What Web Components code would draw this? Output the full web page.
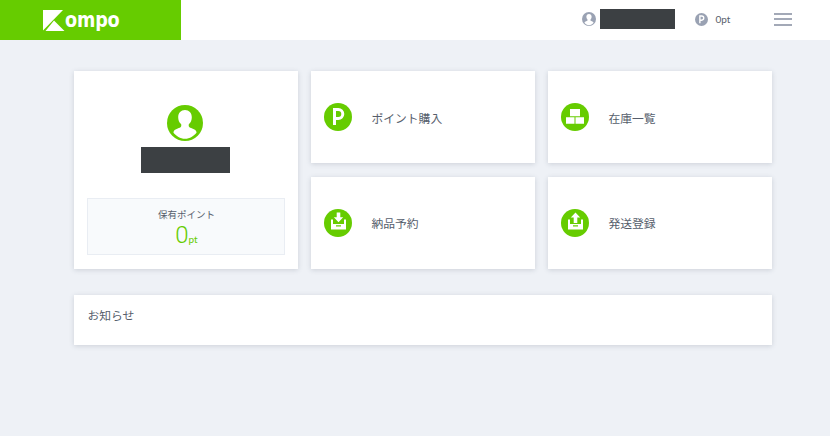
<!DOCTYPE html>
<html lang="ja"><head><meta charset="utf-8"><title>Kompo</title>
<style>
html,body{margin:0;padding:0;height:100%;overflow:hidden}
body{background:#eef1f6;font-family:"Lato","Noto Sans CJK JP",sans-serif;color:#4a5260}
</style></head><body>
<app-header></app-header>
<app-main>
  <profile-card></profile-card>
  <menu-card label="ポイント購入" icon="p"></menu-card>
  <menu-card label="在庫一覧" icon="boxes"></menu-card>
  <menu-card label="納品予約" icon="in"></menu-card>
  <menu-card label="発送登録" icon="out"></menu-card>
  <notice-card></notice-card>
</app-main>
<script>
const G="#66cc00";
const PGLYPH=`<path fill="none" stroke="#fff" stroke-width="3" d="M10.500 22V6.500h3.800a4.500 4.500 0 0 1 0 9h-3.800"/>`;
const TRAY=`<path fill="#fff" fill-rule="evenodd" d="M7 10.500h15v10H7zM9 10.500v4.500h11v-4.500zM12 16.300v1.200h5v-1.200z"/>`;
const ICONS={
 p:`<circle cx="14" cy="14" r="14" fill="${G}"/>${PGLYPH}`,
 boxes:`<circle cx="14" cy="14" r="14" fill="${G}"/><path fill="#fff" d="M9 6h10v7.300H9zM5 14.300h8.500v6.500H5zM14.500 14.300h8.500v6.500h-8.500z"/>`,
 in:`<circle cx="14" cy="14" r="14" fill="${G}"/>${TRAY}<path fill="#fff" d="M12.700 3.500h3.600v4.700h2.900l-4.700 5-4.700-5h2.900z"/>`,
 out:`<circle cx="14" cy="14" r="14" fill="${G}"/>${TRAY}<path fill="#fff" d="M14.500 3.500l4.700 5h-2.900v5.500h-3.600V8.500H9.800z"/>`
};
const PERSON=(bg,fg)=>`<circle cx="18" cy="18" r="18" fill="${bg}"/><path fill="${fg}" d="M18 5c-4 0-6.800 3-6.800 7.200 0 3 1 5.300 2.800 6.800.4.400.6 2.500-.5 3.300-1.600 1.100-6.300 1.700-7 4.700a1.500 1.500 0 0 0 .2 1C9 30.800 13.300 33.800 18 33.800s9-3 11.300-5.800a1.500 1.500 0 0 0 .2-1c-.7-3-5.400-3.600-7-4.700-1.100-.8-.9-2.900-.5-3.300 1.800-1.500 2.800-3.800 2.800-6.800C24.800 8 22 5 18 5z"/>`;
function def(name,html,init){
  customElements.define(name,class extends HTMLElement{
    constructor(){super();this.attachShadow({mode:"open"}).innerHTML=html;}
    connectedCallback(){init&&init(this.shadowRoot,this);}
  });
}
def("app-header",`<style>
:host{display:flex;height:39.500px;background:#fff;align-items:stretch;color:#59606c}
.logo{width:181px;background:${G};display:flex;align-items:center;padding-left:43px;box-sizing:border-box;flex:none;overflow:hidden}
.logo svg{display:block;flex:none;margin-top:1px}
.logo span{font:900 20.500px/1 "DejaVu Sans",sans-serif;color:#fff;letter-spacing:-.2px;margin:0;transform:scaleX(.86);transform-origin:left;white-space:nowrap}
.right{margin-left:auto;display:flex;align-items:center;height:38.500px;padding-right:38px}
.ava{width:14px;height:14px;display:block;margin-right:4px}
.mask{width:75px;height:20px;background:#3c4043;margin-right:20px}
.pi{width:13px;height:13px;display:block;margin-right:8px}
.pt{font-size:10px;width:14px;margin-right:44px;white-space:nowrap}
.burger{width:18.500px;display:flex;flex-direction:column;gap:3.500px}
.burger i{display:block;height:2px;background:#a3a9b7}
</style>
<div class="logo"><svg width="22" height="21" viewBox="0 0 22 21"><path fill="#fff" d="M0 0h20L0 20.500zM2.500 21L11 10.500 21.500 21z"/></svg><span>ompo</span></div>
<div class="right">
<svg class="ava" viewBox="0 0 36 36">${PERSON("#9aa2b3","#fff")}</svg><div class="mask"></div>
<svg class="pi" viewBox="0 0 28 28"><circle cx="14" cy="14" r="14" fill="#9aa2b3"/>${PGLYPH}</svg>
<span class="pt">0pt</span>
<div class="burger"><i></i><i></i><i></i></div>
</div>`);
def("app-main",`<style>
:host{display:grid;grid-template-columns:repeat(3,224px);grid-template-rows:92px 92px auto;column-gap:13px;row-gap:13.500px;padding:31.500px 0 0 74.400px}
::slotted(profile-card){grid-row:1/3}
::slotted(notice-card){grid-column:1/4;margin-top:13px}
</style><slot></slot>`);
const CARD=`background:#fff;box-shadow:0 1px 5px rgba(70,80,100,.2);`;
def("profile-card",`<style>
:host{display:flex;flex-direction:column;align-items:center;${CARD}padding:34px 13px 13px;box-sizing:border-box}
svg{width:36px;height:36px;display:block;margin-right:3px}
.mask{width:89px;height:26px;background:#3c4043;margin-top:6px;margin-right:1px}
.box{margin-top:25px;align-self:stretch;height:57px;box-sizing:border-box;background:#f8fafc;border:1px solid #e9edf3;text-align:center;padding-top:9px}
.l{font-size:9.500px;line-height:13px;color:#565e6c;display:block}
.v{display:block;color:${G};font:300 24px/26px Roboto,sans-serif;margin-top:1px}
.v small{font:400 10px Lato,sans-serif}
</style><svg viewBox="0 0 36 36">${PERSON(G,"#fff")}</svg><div class="mask"></div>
<div class="box"><span class="l">保有ポイント</span><span class="v">0<small>pt</small></span></div>`);
def("menu-card",`<style>
:host{display:flex;align-items:center;${CARD}padding-left:13px;box-sizing:border-box;font-size:11.800px;color:#565e6c}
svg{width:28px;height:28px;display:block;margin-right:19px;flex:none}
</style><svg viewBox="0 0 28 28"></svg><span></span>`,(r,h)=>{
  r.querySelector("svg").innerHTML=ICONS[h.getAttribute("icon")];
  r.querySelector("span").textContent=h.getAttribute("label");
});
def("notice-card",`<style>
:host{display:block;height:50px;${CARD}padding:11.500px 13px;box-sizing:border-box;font-size:11.800px;line-height:17px;color:#565e6c}
</style>お知らせ`);
</script></body></html>
